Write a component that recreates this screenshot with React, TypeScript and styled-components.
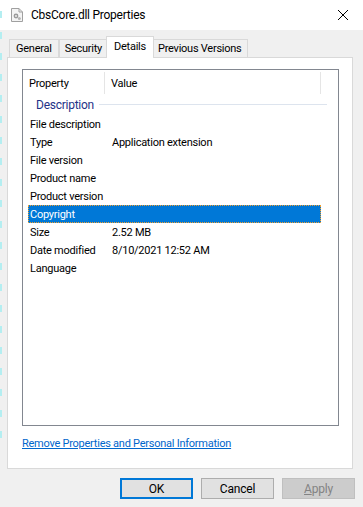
import React from 'react';
import styled, { createGlobalStyle } from 'styled-components';

const GlobalStyle = createGlobalStyle`
  html, body {
    margin: 0;
    padding: 0;
    background: #f0f0f0;
  }
  * {
    box-sizing: border-box;
  }
`;

const rows: { label: string; value?: string; selected?: boolean }[] = [
  { label: 'File description' },
  { label: 'Type', value: 'Application extension' },
  { label: 'File version' },
  { label: 'Product name' },
  { label: 'Product version' },
  { label: 'Copyright', selected: true },
  { label: 'Size', value: '2.52 MB' },
  { label: 'Date modified', value: '8/10/2021 12:52 AM' },
  { label: 'Language' },
];

const tabs = ['General', 'Security', 'Details', 'Previous Versions'];

const FileIcon = () => (
  <svg width="12" height="14" viewBox="0 0 12 14">
    <path d="M0.5 0.5 H8 L11.5 4 V13.5 H0.5 Z" fill="#f4f4f4" stroke="#a0a0a0" />
    <path d="M8 0.5 V4 H11.5" fill="none" stroke="#a0a0a0" />
    <circle cx="5" cy="8" r="2.4" fill="#9a9a9a" />
    <circle cx="5" cy="8" r="0.9" fill="#f4f4f4" />
    <circle cx="8.3" cy="10.6" r="1.5" fill="#b4b4b4" />
  </svg>
);

const CloseIcon = () => (
  <svg width="10" height="10" viewBox="0 0 10 10">
    <path d="M0 0 L10 10 M10 0 L0 10" stroke="#000" strokeWidth="1" />
  </svg>
);

export default function App() {
  return (
    <>
      <GlobalStyle />
      <Window>
        <DesktopEdge />
        <TitleBar>
          <FileIcon />
          <Title>CbsCore.dll Properties</Title>
          <CloseButton>
            <CloseIcon />
          </CloseButton>
        </TitleBar>

        <Body>
          <TabRow>
            {tabs.map((t) => (
              <Tab key={t} $active={t === 'Details'}>
                {t}
              </Tab>
            ))}
          </TabRow>

          <Panel>
            <ListBox>
              <HeaderRow>
                <HeaderCell $width={82}>Property</HeaderCell>
                <HeaderCell $width={216}>Value</HeaderCell>
              </HeaderRow>
              <GroupRow>
                <GroupLabel>Description</GroupLabel>
                <GroupLine />
              </GroupRow>
              {rows.map((r) => (
                <Row key={r.label} $selected={r.selected}>
                  <LabelCell>{r.label}</LabelCell>
                  <ValueCell>{r.value}</ValueCell>
                </Row>
              ))}
            </ListBox>
            <Link href="#">Remove Properties and Personal Information</Link>
          </Panel>

          <ButtonRow>
            <Button $default>OK</Button>
            <Button>Cancel</Button>
            <Button disabled>
              <u>A</u>pply
            </Button>
          </ButtonRow>
        </Body>
      </Window>
    </>
  );
}

const Window = styled.div`
  position: relative;
  width: 363px;
  height: 507px;
  display: flex;
  flex-direction: column;
  background: #f0f0f0;
  font-family: Roboto, 'Liberation Sans', Arial, sans-serif;
  font-size: 11px;
  letter-spacing: -0.25px;
  color: #000;
  overflow: hidden;
`;

const DesktopEdge = styled.div`
  position: absolute;
  left: 0;
  top: 0;
  width: 2px;
  height: 446px;
  background: repeating-linear-gradient(
    to bottom,
    transparent 0px,
    transparent 11px,
    #b4eef1 11px,
    #b4eef1 18px,
    transparent 18px,
    transparent 21px
  );
`;

const TitleBar = styled.div`
  height: 30px;
  background: #fff;
  display: flex;
  align-items: center;
  padding-left: 11px;
  flex-shrink: 0;
`;

const Title = styled.span`
  margin-left: 8px;
  font-size: 12px;
  color: #000;
  flex: 1;
`;

const CloseButton = styled.div`
  width: 30px;
  display: flex;
  align-items: center;
  justify-content: center;
  margin-right: 5px;
`;

const Body = styled.div`
  flex: 1;
  display: flex;
  flex-direction: column;
  padding: 6px 10px 0 7px;
`;

const TabRow = styled.div`
  display: flex;
  align-items: flex-end;
  height: 22px;
  padding-left: 2px;
  position: relative;
  z-index: 1;
  margin-bottom: -1px;
`;

const Tab = styled.div<{ $active?: boolean }>`
  height: ${(p) => (p.$active ? 22 : 19)}px;
  padding: 0 ${(p) => (p.$active ? 7 : 5)}px;
  margin: 0 ${(p) => (p.$active ? -2 : 0)}px;
  display: flex;
  align-items: center;
  padding-bottom: ${(p) => (p.$active ? 2 : 0)}px;
  background: ${(p) => (p.$active ? '#fff' : '#f0f0f0')};
  border: 1px solid #d9d9d9;
  border-bottom: ${(p) => (p.$active ? 'none' : '1px solid #d9d9d9')};
  position: relative;
  z-index: ${(p) => (p.$active ? 2 : 1)};
  &:first-child {
    padding: 0 6px;
  }
  & + & {
    border-left: ${(p) => (p.$active ? '1px solid #d9d9d9' : 'none')};
  }
`;

const Panel = styled.div`
  height: 412px;
  width: 346px;
  background: #fff;
  border: 1px solid #d9d9d9;
  padding: 11px 13px 0 14px;
  display: flex;
  flex-direction: column;
`;

const ListBox = styled.div`
  height: 357px;
  width: 317px;
  border: 1px solid #828790;
  background: #fff;
  display: flex;
  flex-direction: column;
`;

const HeaderRow = styled.div`
  display: flex;
  height: 24px;
  padding: 2px 0 0 0;
`;

const HeaderCell = styled.div<{ $width: number }>`
  width: ${(p) => p.$width}px;
  display: flex;
  align-items: center;
  padding-left: 6px;
  border-right: 1px solid #e5e5e5;
`;

const GroupRow = styled.div`
  height: 21px;
  display: flex;
  align-items: center;
  padding-left: 13px;
  padding-right: 11px;
`;

const GroupLabel = styled.span`
  color: #1e3287;
  font-size: 12px;
`;

const GroupLine = styled.div`
  flex: 1;
  height: 1px;
  background: #dde4ee;
  margin-left: 5px;
`;

const Row = styled.div<{ $selected?: boolean }>`
  height: 18px;
  display: flex;
  align-items: center;
  margin-left: 5px;
  width: 293px;
  background: ${(p) => (p.$selected ? '#0078d7' : 'transparent')};
  color: ${(p) => (p.$selected ? '#fff' : '#000')};
  outline: ${(p) => (p.$selected ? '1px dotted #f0a030' : 'none')};
  outline-offset: -1px;
`;

const LabelCell = styled.div`
  width: 84px;
  padding-left: 2px;
  white-space: nowrap;
`;

const ValueCell = styled.div`
  flex: 1;
  white-space: nowrap;
`;

const Link = styled.a`
  margin-top: 11px;
  color: #0066cc;
  text-decoration: underline;
  align-self: flex-start;
`;

const ButtonRow = styled.div`
  display: flex;
  justify-content: flex-end;
  gap: 8px;
  padding-top: 9px;
  margin-right: -2px;
`;

const Button = styled.button<{ $default?: boolean }>`
  width: 73px;
  height: 21px;
  font-family: Roboto, 'Liberation Sans', Arial, sans-serif;
  font-size: 12px;
  letter-spacing: -0.2px;
  color: #000;
  background: #e1e1e1;
  border: ${(p) => (p.$default ? '2px solid #0078d7' : '1px solid #adadad')};
  padding: 0;
  &:disabled {
    background: #cccccc;
    border-color: #bfbfbf;
    color: #838383;
  }
`;
